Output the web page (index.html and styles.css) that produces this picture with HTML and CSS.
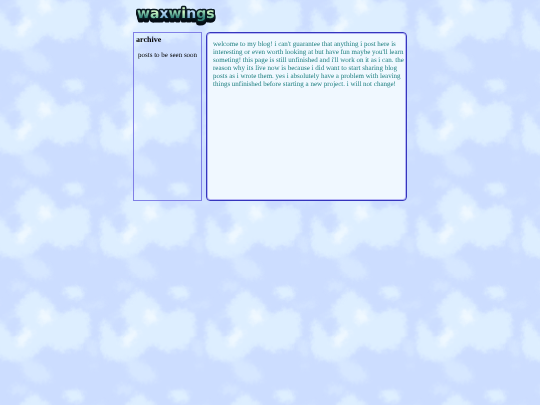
FILE: index.html
```html
<!DOCTYPE html>
<html lang="en">
<head>
<meta charset="utf-8">
<title>waxwings</title>
<link rel="stylesheet" href="styles.css">
</head>
<body>
<svg class="sky" aria-hidden="true">
  <defs>
    <filter id="soft" x="-20%" y="-20%" width="140%" height="140%" color-interpolation-filters="sRGB">
      <feGaussianBlur stdDeviation="2" result="b"/>
      <feTurbulence type="fractalNoise" baseFrequency="0.2" numOctaves="4" seed="9" result="n"/>
      <feDisplacementMap in="b" in2="n" scale="7" xChannelSelector="R" yChannelSelector="G"/>
      <feGaussianBlur stdDeviation="0.7"/>
    </filter>
    <g id="cloud" filter="url(#soft)">
      <path d="M33 82L25 90L18 97L14 106L20 111L22 119L14 131L7 122L1 112L-4 115L-6 136L-2 151L12 153L23 157L35 147L45 138L62 145L80 141L90 128L89 107L76 101L60 108L53 98L44 90Z" fill="#ddeeff"/>
      <path d="M87 133L98 135L97 151L89 147ZM91 156l5 1v4l-4-1ZM4 112L16 102L18 110L8 113Z" fill="#d4e5ff"/>
      <path d="M19 150L37 155L50 164L52 174L35 176L24 169Z" fill="#d6e7ff"/>
      <path d="M64 80L82 80L83 90L73 93L65 87Z" fill="#deefff"/>
      <path d="M80 94L90 98L104 92L103 100L87 102Z" fill="#d3e4ff"/>
      <path d="M11 75L27 75L27 83L11 84Z" fill="#d4e5ff"/>
      <path d="M39 103L50 103L52 114L43 117L38 112ZM28 121L34 123L23 141L17 138L19 130Z" fill="#eff8ff"/>
    </g>
    <pattern id="clouds" x="-7.5" y="73" width="105.5" height="103.5" patternUnits="userSpaceOnUse">
      <rect width="106" height="104" fill="#ccddff"/>
      <g transform="translate(7.5 -73)">
        <use href="#cloud"/>
        <use href="#cloud" x="-105.5"/>
        <use href="#cloud" x="105.5"/>
        <use href="#cloud" y="-103.5"/>
        <use href="#cloud" y="103.5"/>
      </g>
    </pattern>
  </defs>
  <rect width="100%" height="100%" fill="url(#clouds)"/>
</svg>
<div class="page">
  <header>
    <svg class="logo" viewBox="0 0 84 28" role="img" aria-label="waxwings">
      <defs>
        <linearGradient id="teal" x2="0" y2="1"><stop offset=".35" stop-color="#8fd0ae"/><stop offset=".7" stop-color="#35867b"/></linearGradient>
        <linearGradient id="mint" x2="0" y2="1"><stop offset=".4" stop-color="#c8f2c0"/><stop offset=".8" stop-color="#62b99d"/></linearGradient>
        <linearGradient id="blue" x2="0" y2="1"><stop offset=".4" stop-color="#b5d5f3"/><stop offset=".8" stop-color="#6ba9cc"/></linearGradient>
      </defs>
      <text class="logo-face" x="3" y="18"><tspan fill="url(#teal)">w</tspan><tspan fill="url(#mint)">a</tspan><tspan fill="url(#blue)">x</tspan><tspan fill="url(#teal)">w</tspan><tspan fill="url(#mint)">i</tspan><tspan fill="url(#blue)">n</tspan><tspan fill="url(#teal)">g</tspan><tspan fill="url(#mint)">s</tspan></text>
    </svg>
  </header>
  <div class="columns">
    <aside class="archive">
      <h2>archive</h2>
      <p>posts to be seen soon</p>
    </aside>
    <main class="post">
      <p>welcome to my blog! i can't guarantee that anything i post here is interesting or even worth looking at but have fun maybe you'll learn someting! this page is still unfinished and i'll work on it as i can. the reason why its live now is because i did want to start sharing blog posts as i wrote them. yes i absolutely have a problem with leaving things unfinished before starting a new project. i will not change!</p>
    </main>
  </div>
</div>
</body>
</html>
```
FILE: styles.css
```css
* { box-sizing: border-box; }

body {
  margin: 0;
  background: #ccddff;
  color: #000;
  font-family: "Liberation Serif", serif;
  font-size: 7px;
  line-height: 8px;
  text-rendering: geometricPrecision;
}

.sky {
  position: fixed;
  inset: 0;
  z-index: -1;
  width: 100%;
  height: 100%;
}

.page {
  max-width: 274px;
  margin: 0 auto;
}

.logo {
  display: block;
  width: 84px;
  height: 28px;
  margin-left: 1px;
}

.logo-face {
  font-family: "DejaVu Sans", sans-serif;
  font-size: 14px;
  font-weight: bold;
  stroke: #0a1a22;
  stroke-width: 3px;
  stroke-linejoin: round;
  paint-order: stroke;
  filter: drop-shadow(0 1px 0 #050d14) drop-shadow(0 2px 0 #050d14);
}

.columns {
  display: grid;
  grid-template-columns: 69px 1fr;
  gap: 4px;
  min-height: 169px;
  margin-top: 4px;
}

.archive {
  padding: 3px 2px;
  border: 1px solid #8080e6;
}

h2 {
  margin: 0;
  font-size: 8px;
  line-height: 8px;
}

.archive p {
  margin: 7px 0 7px 2px;
}

.post {
  padding: 7px 0 7px 6px;
  border: 1px solid #3535bd;
  border-radius: 4px;
  box-shadow: inset 0 0 0 1px #b5b5f4;
  background: #f0f8ff;
  color: #218181;
}

.post p {
  margin: 0;
}
```
